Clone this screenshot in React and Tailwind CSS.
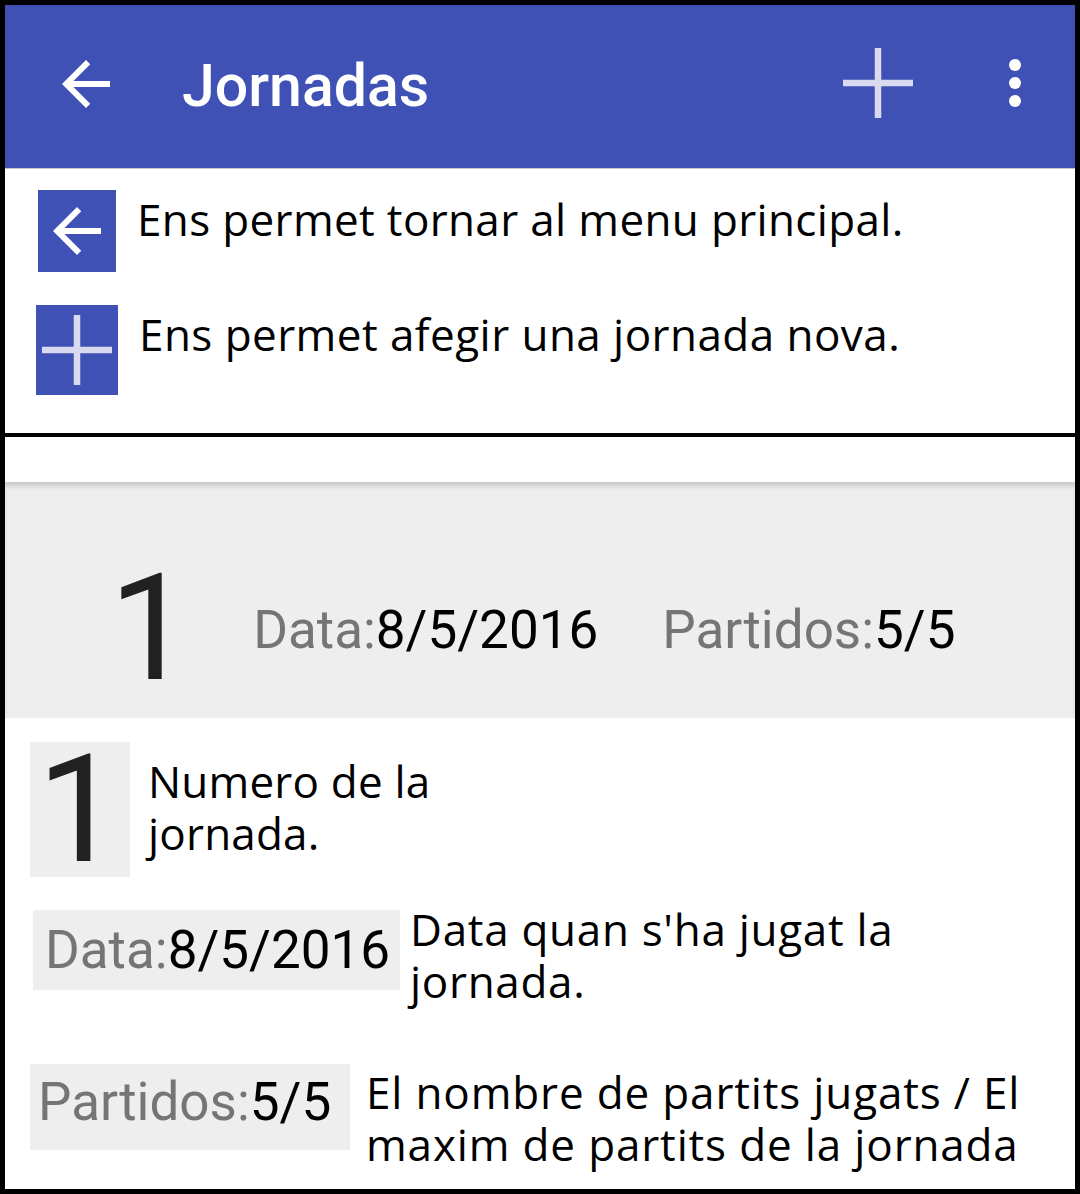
import React from 'react';

const BackArrow = ({ size = 72 }) => (
    <svg width={size} height={size} viewBox="0 0 24 24" fill="white">
        <path d="M20 11H7.83l5.59-5.59L12 4l-8 8 8 8 1.41-1.41L7.83 13H20v-2z" />
    </svg>
);

const Plus = () => (
    <svg width="70" height="70" viewBox="0 0 70 70" stroke="#d9daf0" strokeWidth="6.5">
        <path d="M35 0V70M0 35H70" />
    </svg>
);

const MoreVert = () => (
    <svg width="72" height="72" viewBox="0 0 24 24" fill="white">
        <circle cx="12" cy="6" r="2" />
        <circle cx="12" cy="12" r="2" />
        <circle cx="12" cy="18" r="2" />
    </svg>
);

const roboto = "font-['Roboto',sans-serif]";
const desc = "font-['Open_Sans',sans-serif] text-[44px] leading-[52px] text-black whitespace-nowrap";

const DataLabel = () => (
    <span className={`${roboto} text-[53px] leading-none whitespace-nowrap`}>
        <span className="text-[#757575]">Data:</span>
        <span className="text-black">8/5/2016</span>
    </span>
);

const PartidosLabel = () => (
    <span className={`${roboto} text-[53px] leading-none whitespace-nowrap`}>
        <span className="text-[#757575]">Partidos:</span>
        <span className="text-black">5/5</span>
    </span>
);

export default function App() {
    return (
        <div className="w-[1080px] h-[1194px] border-[5px] border-black bg-white flex flex-col overflow-hidden">
            {/* Toolbar */}
            <header className="h-[164px] shrink-0 bg-[#3f51b5] border-b border-[#c8c8c8] flex items-center">
                <div className="ml-[45px] mb-[6px]">
                    <BackArrow />
                </div>
                <h1 className={`${roboto} ml-[60px] mb-[2px] text-[59px] font-medium leading-none text-white`}>Jornadas</h1>
                <div className="ml-auto mb-[8px]">
                    <Plus />
                </div>
                <div className="ml-[66px] mr-[24px] mb-[8px]">
                    <MoreVert />
                </div>
            </header>

            {/* Llegenda botons */}
            <div className="h-[264px] shrink-0">
                <div className="flex items-start mt-[21px] ml-[33px]">
                    <div className="w-[78px] h-[82px] bg-[#3f51b5] flex items-center justify-center">
                        <BackArrow />
                    </div>
                    <p className={`${desc} ml-[21px] mt-[3px] tracking-[0.35px]`}>Ens permet tornar al menu principal.</p>
                </div>
                <div className="flex items-start mt-[33px] ml-[31px]">
                    <div className="w-[82px] h-[90px] bg-[#3f51b5] flex items-center justify-center">
                        <Plus />
                    </div>
                    <p className={`${desc} ml-[21px] mt-[3px] tracking-[0.45px]`}>Ens permet afegir una jornada nova.</p>
                </div>
            </div>

            <div className="h-[4px] shrink-0 bg-black" />
            <div className="h-[45px] shrink-0" />

            {/* Jornada card */}
            <div className="h-[236px] shrink-0 bg-[#eeeeee] shadow-[inset_0_6px_6px_-3px_rgba(0,0,0,0.2)] flex items-center pt-[58px]">
                <span className={`${roboto} ml-[104px] text-[148px] leading-none text-[#212121]`}>1</span>
                <div className="ml-[61px] mt-[2px]">
                    <DataLabel />
                </div>
                <div className="ml-[64px] mt-[2px]">
                    <PartidosLabel />
                </div>
            </div>

            {/* Llegenda camps */}
            <div className="flex-1">
                <div className="flex items-start mt-[24px] ml-[25px]">
                    <div className="w-[100px] h-[135px] bg-[#eeeeee] flex items-center pl-[7px]">
                        <span className={`${roboto} text-[150px] leading-none text-[#212121]`}>1</span>
                    </div>
                    <p className={`${desc} ml-[18px] mt-[13px] tracking-[0.2px]`}>
                        Numero de la
                        <br />
                        jornada.
                    </p>
                </div>
                <div className="flex items-start mt-[26px] ml-[28px]">
                    <div className="w-[367px] h-[80px] mt-[7px] bg-[#eeeeee] flex items-center pl-[12px]">
                        <DataLabel />
                    </div>
                    <p className={`${desc} ml-[10px] tracking-[0.7px]`}>
                        Data quan s'ha jugat la
                        <br />
                        jornada.
                    </p>
                </div>
                <div className="flex items-start mt-[57px] ml-[25px]">
                    <div className="w-[320px] h-[86px] bg-[#eeeeee] flex items-center pl-[8px] pb-[9px]">
                        <PartidosLabel />
                    </div>
                    <p className={`${desc} ml-[16px] mt-[2px] tracking-[0.85px]`}>
                        El nombre de partits jugats / El
                        <br />
                        maxim de partits de la jornada
                    </p>
                </div>
            </div>
        </div>
    );
}
